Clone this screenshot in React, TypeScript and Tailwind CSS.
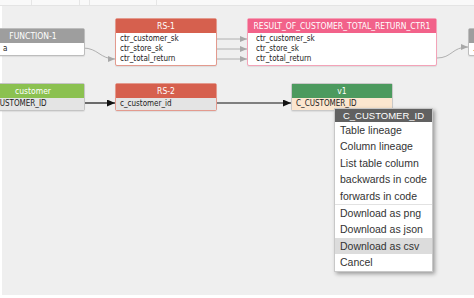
import React from "react";

interface NodeProps {
  x: number;
  y: number;
  w: number;
  title: string;
  head: string;
  border: string;
  rows: string[];
  rowClass?: string;
  bodyClass?: string;
}

// one box of the lineage graph: coloured title bar plus its column rows
const LineageNode = ({ x, y, w, title, head, border, rows, rowClass = "", bodyClass = "" }: NodeProps) => {
  return (
    <div
      className={`absolute border rounded-[2px] bg-white shadow-[0_1px_1px_rgba(0,0,0,0.08)] ${border}`}
      style={{ left: x, top: y, width: w }}
    >
      <div className={`h-[14px] flex items-center justify-center text-white text-[8.5px] leading-none ${head}`}>
        {title}
      </div>
      <div className={`flex flex-col pt-[1px] pb-[1px] ${bodyClass}`}>
        {rows.map((r) => (
          <div key={r} className={`h-[10px] flex items-center pl-[4px] text-[8px] leading-none text-[#222] ${rowClass}`}>
            {r}
          </div>
        ))}
      </div>
    </div>
  );
};

const menuTop = ["Table lineage", "Column lineage", "List table column", "backwards in code", "forwards in code"];
const menuBottom = ["Download as png", "Download as json", "Download as csv", "Cancel"];

export default function App() {
  return (
    <div
      className="w-[474px] h-[298px] flex flex-col overflow-hidden bg-white"
      style={{ fontFamily: "'DejaVu Sans Condensed', 'DejaVu Sans', sans-serif" }}
    >
      {/* faint strip of the panel above */}
      <div className="h-[6px] flex bg-[#f9f9f9] border-b border-[#e4e4e4]">
        <div className="w-[32px] border-r border-[#e6e6e6]" />
        <div className="w-[48px] border-r border-[#e6e6e6]" />
        <div className="w-[10px] border-r border-[#e6e6e6]" />
        <div className="w-[67px] border-r border-[#e6e6e6]" />
        <div className="flex-1" />
      </div>

      <div className="flex-1 relative bg-[#efefef] ml-[2px]">
        {/* edges, canvas coords shifted by the top strip (7px) and left margin (2px) */}
        <svg className="absolute left-[-2px] top-[-7px]" width="474" height="296">
          <defs>
            <marker id="ag" markerWidth="8" markerHeight="6" refX="7" refY="3" orient="auto" markerUnits="userSpaceOnUse">
              <path d="M0,0 L7,3 L0,6 z" fill="#a8a8a8" />
            </marker>
            <marker id="ab" markerWidth="9" markerHeight="7" refX="8" refY="3.5" orient="auto" markerUnits="userSpaceOnUse">
              <path d="M0,0 L8,3.5 L0,7 z" fill="#111" />
            </marker>
          </defs>
          <path d="M83,49 C98,49 100,60 115,60" stroke="#b0b0b0" strokeWidth="1" fill="none" markerEnd="url(#ag)" />
          <path d="M217,40 L247,40" stroke="#b0b0b0" strokeWidth="1" markerEnd="url(#ag)" />
          <path d="M217,50 L247,50" stroke="#b0b0b0" strokeWidth="1" markerEnd="url(#ag)" />
          <path d="M217,60 L247,60" stroke="#b0b0b0" strokeWidth="1" markerEnd="url(#ag)" />
          <path d="M437,59 C452,59 452,48 468,48" stroke="#b0b0b0" strokeWidth="1" fill="none" markerEnd="url(#ag)" />
          <path d="M83,104 L115,104" stroke="#111" strokeWidth="1.2" markerEnd="url(#ab)" />
          <path d="M217,104 L291,104" stroke="#111" strokeWidth="1.2" markerEnd="url(#ab)" />
        </svg>

        <LineageNode
          x={-21} y={22} w={104} title="FUNCTION-1" head="bg-[#9e9e9e]" border="border-[#bdbdbd]"
          rows={["a"]} rowClass="pl-[21px] text-[#3b5bdb]"
        />
        <LineageNode
          x={113} y={12} w={102} title="RS-1" head="bg-[#d6604e]" border="border-[#e39a8e]"
          rows={["ctr_customer_sk", "ctr_store_sk", "ctr_total_return"]}
        />
        <LineageNode
          x={245} y={12} w={190} title="RESULT_OF_CUSTOMER_TOTAL_RETURN_CTR1" head="bg-[#f2628a]" border="border-[#f3a3b8]"
          rows={["ctr_customer_sk", "ctr_store_sk", "ctr_total_return"]} rowClass="pl-[8px]"
        />
        <LineageNode
          x={466} y={22} w={40} title="" head="bg-[#9e9e9e]" border="border-[#bdbdbd]"
          rows={["."]}
        />
        <LineageNode
          x={-21} y={77} w={104} title="customer" head="bg-[#8bc150]" border="border-[#c4c4c4]"
          rows={["C_CUSTOMER_ID"]} bodyClass="bg-[#e4e4e4]"
        />
        <LineageNode
          x={113} y={77} w={102} title="RS-2" head="bg-[#d6604e]" border="border-[#e39a8e]"
          rows={["c_customer_id"]} bodyClass="bg-[#e4e4e4]"
        />
        <LineageNode
          x={289} y={77} w={102} title="v1" head="bg-[#4c9a5e]" border="border-[#c9c9c9]"
          rows={["C_CUSTOMER_ID"]} bodyClass="bg-[#fbe6cf]" rowClass="text-[#3a2a1a]"
        />

        {/* context menu */}
        <div
          className="absolute left-[332px] top-[102px] w-[99px] bg-white border border-[#c8c8c8] shadow-[2px_2px_4px_rgba(0,0,0,0.35)] text-[#333]"
          style={{ fontFamily: "'Liberation Sans Narrow', 'Liberation Sans', Arial, sans-serif" }}
        >
          <div className="h-[13px] bg-[#616161] text-white text-[9.5px] leading-none flex items-center justify-center">
            C_CUSTOMER_ID
          </div>
          {menuTop.map((m) => (
            <div key={m} className="h-[16.4px] flex items-center pl-[5px] text-[10.5px] leading-none">
              {m}
            </div>
          ))}
          <div className="border-t border-[#e2e2e2]" />
          {menuBottom.map((m) => (
            <div
              key={m}
              className={`h-[16.4px] flex items-center pl-[5px] text-[10.5px] leading-none ${m === "Download as csv" ? "bg-[#dcdcdc]" : ""}`}
            >
              {m}
            </div>
          ))}
        </div>
      </div>

      <div className="h-[3px] bg-white" />
    </div>
  );
}
